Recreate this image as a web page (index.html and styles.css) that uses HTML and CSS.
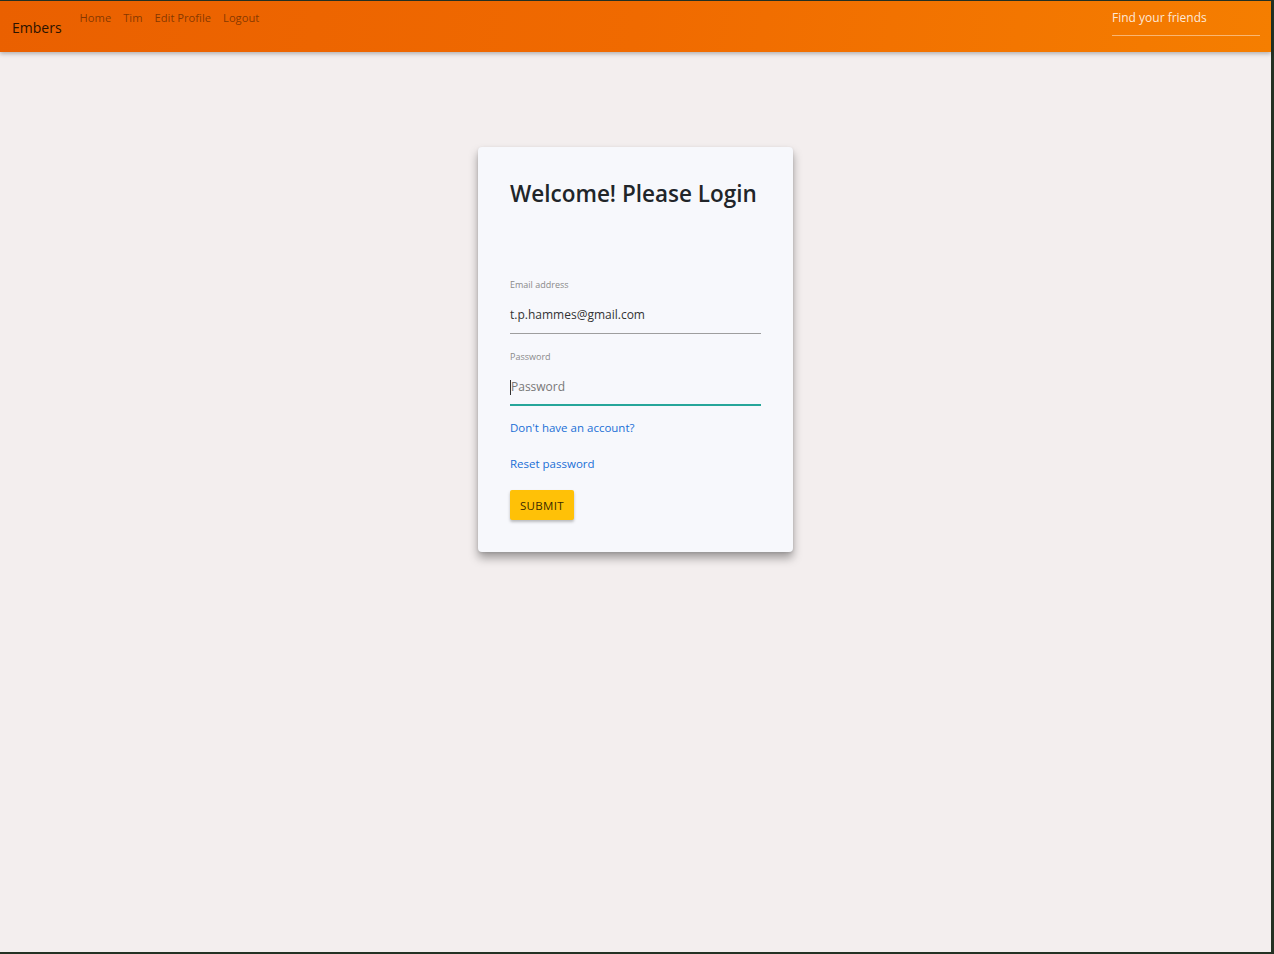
FILE: index.html
```html
<!DOCTYPE html>
<html>
<head>
<meta charset="utf-8">
<link rel="stylesheet" href="styles.css">
</head>
<body>
<div class="frame">
  <header class="navbar">
    <div class="nav-left">
      <a class="brand">Embers</a>
      <nav class="links">
        <a>Home</a><a>Tim</a><a>Edit Profile</a><a>Logout</a>
      </nav>
    </div>
    <div class="search">
      <input type="text" placeholder="Find your friends">
    </div>
  </header>
  <main class="content">
    <section class="card">
      <h1 class="title">Welcome! Please Login</h1>
      <form class="form">
        <div class="field">
          <label class="label">Email address</label>
          <div class="input">t.p.hammes@gmail.com</div>
        </div>
        <div class="field field-last">
          <label class="label">Password</label>
          <div class="input focused"><span class="caret"></span><span class="placeholder">Password</span></div>
        </div>
        <a class="link">Don't have an account?</a>
        <a class="link">Reset password</a>
        <button type="button" class="submit">SUBMIT</button>
      </form>
    </section>
  </main>
</div>
</body>
</html>
```
FILE: styles.css
```css
html, body {
  margin: 0;
  padding: 0;
  height: 100%;
}
body {
  background: #243224;
  font-family: "Open Sans", "Noto Sans", sans-serif;
}
.frame {
  box-sizing: border-box;
  margin-top: 1px;
  margin-right: 3px;
  height: 951px;
  background: #f3eeee;
  display: flex;
  flex-direction: column;
}
.navbar {
  height: 51px;
  flex: none;
  display: flex;
  justify-content: space-between;
  background: linear-gradient(100deg, #ea6000 0%, #f06a00 50%, #f57e00 100%);
  box-shadow: 0 2px 4px rgba(0,0,0,0.25);
  position: relative;
  z-index: 1;
}
.nav-left {
  display: flex;
  align-items: flex-start;
}
.brand {
  font-size: 14px;
  color: #2a1300;
  padding: 17px 0 0 12px;
  line-height: 20px;
}
.links {
  display: flex;
  gap: 12px;
  padding: 8px 0 0 18px;
}
.links a {
  font-size: 11.2px;
  line-height: 18px;
  color: rgba(60, 25, 0, 0.6);
}
.search {
  padding: 4px 11px 0 0;
}
.search input {
  width: 148px;
  border: none;
  border-bottom: 1px solid rgba(255,255,255,0.45);
  background: transparent;
  font-family: inherit;
  font-size: 12px;
  color: #fff;
  padding: 2px 0 9px 0;
  outline: none;
}
.search input::placeholder {
  color: rgba(255,255,255,0.85);
}
.content {
  flex: 1;
  display: flex;
  justify-content: center;
  align-items: flex-start;
  padding-top: 95px;
}
.card {
  width: 315px;
  box-sizing: border-box;
  background: #f7f8fc;
  border-radius: 4px;
  box-shadow: 0 6px 10px rgba(0,0,0,0.35), 0 1px 3px rgba(0,0,0,0.1);
  padding: 30px 32px 32px 32px;
}
.title {
  margin: 0;
  font-size: 22.5px;
  font-weight: 600;
  color: #212529;
  line-height: 34px;
  white-space: nowrap;
}
.form {
  display: flex;
  flex-direction: column;
  align-items: flex-start;
  margin-top: 67px;
}
.field {
  align-self: stretch;
  display: flex;
  flex-direction: column;
  margin-bottom: 16px;
}
.field-last {
  margin-bottom: 11px;
}
.label {
  font-size: 9px;
  color: #8a8a8a;
  line-height: 14px;
}
.input {
  font-size: 12px;
  color: #333;
  line-height: 20px;
  padding: 13px 0 8px;
  border-bottom: 1px solid #9e9e9e;
  display: flex;
  align-items: center;
}
.input.focused {
  border-bottom: 2px solid #26a69a;
  padding-bottom: 7px;
}
.caret {
  width: 1px;
  height: 15px;
  background: #333;
}
.placeholder {
  color: #777;
}
.link {
  font-size: 11.5px;
  color: #1a6fd6;
  line-height: 18px;
  margin-top: 2px;
  margin-bottom: 16px;
}
.submit {
  margin-top: 1px;
  height: 30px;
  padding: 0 10px;
  background: #ffc107;
  border: none;
  border-radius: 2px;
  font-family: inherit;
  font-size: 11.5px;
  letter-spacing: 0.3px;
  color: #3a2a00;
  box-shadow: 0 2px 3px rgba(0,0,0,0.25);
}
```
